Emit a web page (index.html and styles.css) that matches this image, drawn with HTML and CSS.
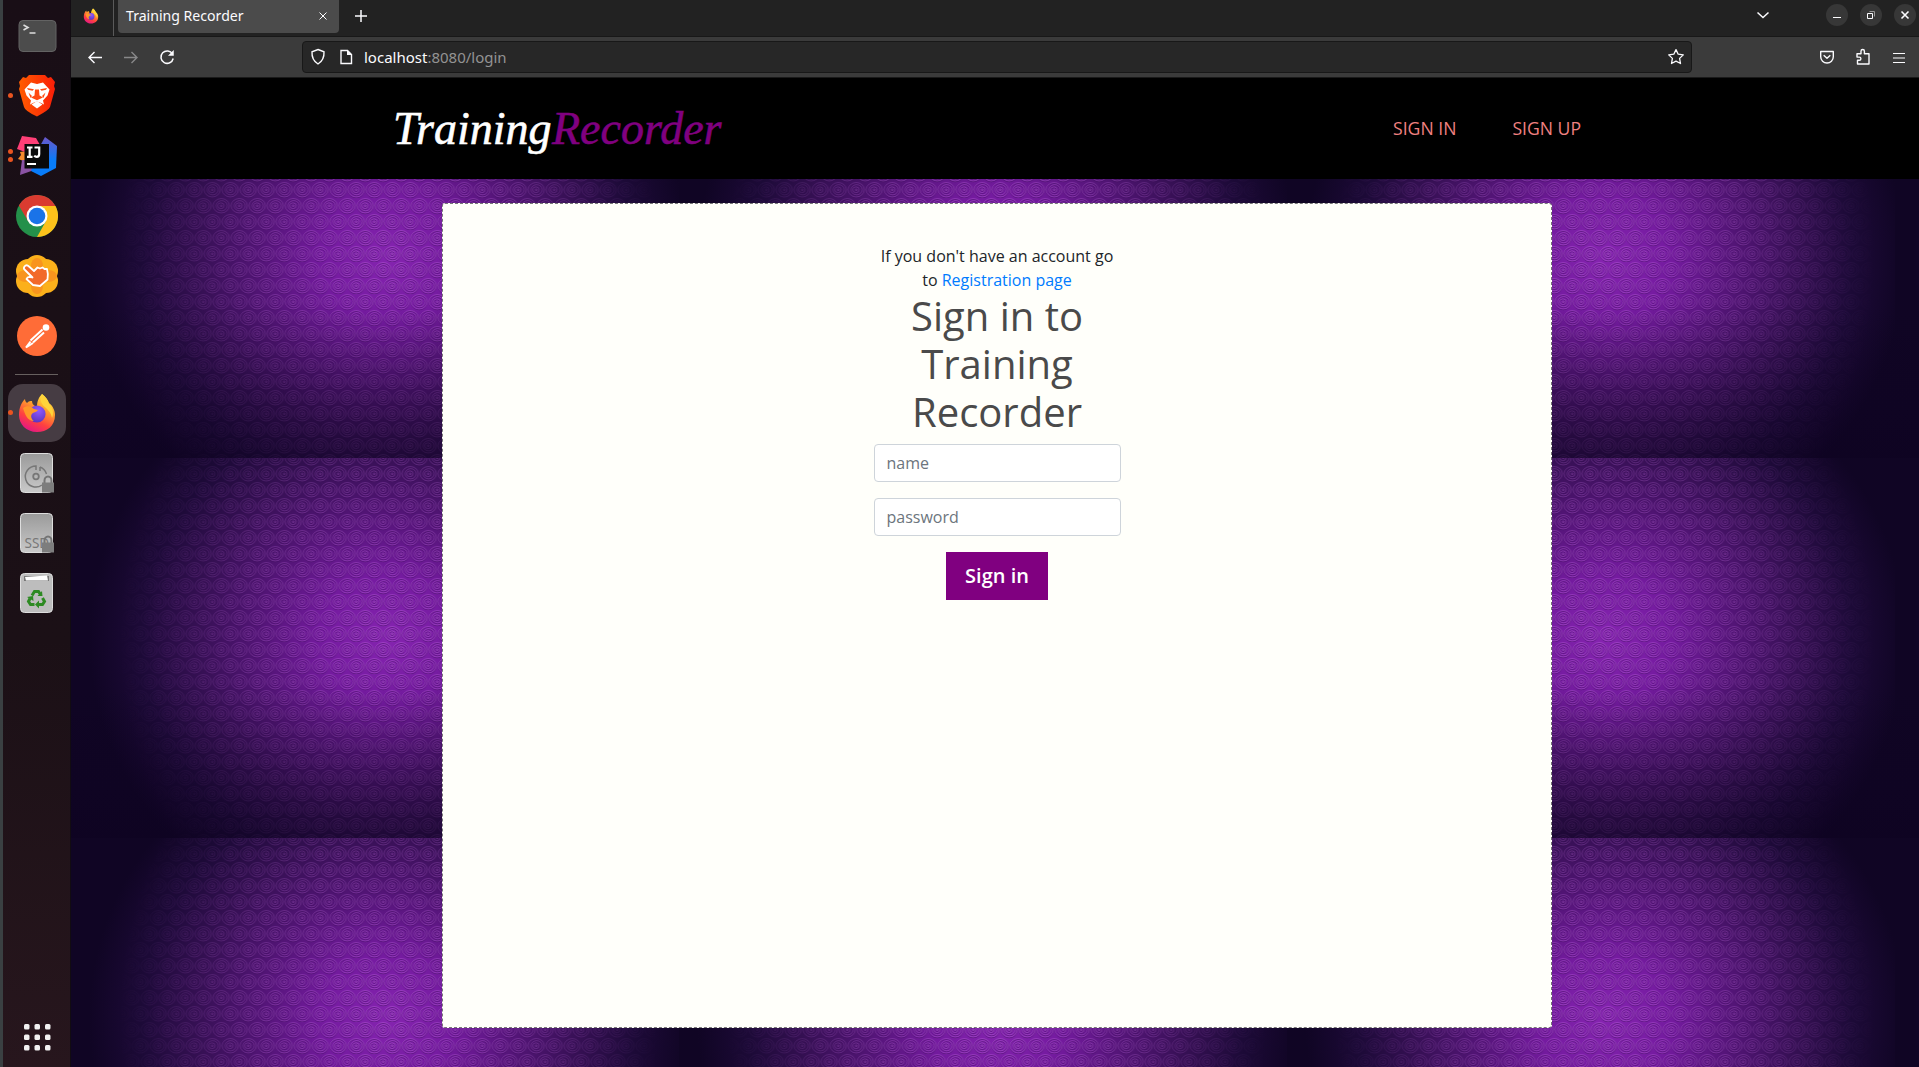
FILE: index.html
```html
<!DOCTYPE html>
<html lang="en">
<head>
<meta charset="utf-8">
<title>Training Recorder</title>
<link rel="stylesheet" href="styles.css">
</head>
<body>
<svg class="defs" width="0" height="0" aria-hidden="true">
  <defs>
    <linearGradient id="flame" x1=".8" y1="0" x2=".3" y2="1"><stop offset="0" stop-color="#fff44f"/><stop offset=".35" stop-color="#ffa42b"/><stop offset=".7" stop-color="#ff4040"/><stop offset="1" stop-color="#e31587"/></linearGradient>
    <radialGradient id="globe" cx=".6" cy=".3" r=".8"><stop offset="0" stop-color="#9059ff"/><stop offset="1" stop-color="#5430b8"/></radialGradient>
    <linearGradient id="brave"><stop offset="0" stop-color="#ff5c00"/><stop offset="1" stop-color="#fa1e08"/></linearGradient>
    <linearGradient id="disk" x2="0" y2="1"><stop offset="0" stop-color="#9a9a9a"/><stop offset="1" stop-color="#c9c9c9"/></linearGradient>
    <linearGradient id="blue" x2="0" y2="1"><stop offset="0" stop-color="#6b57c9"/><stop offset=".6" stop-color="#087cfa"/></linearGradient>
    <symbol id="firefox" viewBox="0 0 38 40">
      <path fill="url(#flame)" d="M24 1C28 4 30 7 31 10C35 13 37 18 37 22C37 33 29 39 19 39C8 39 1 31 1 22C1 15 3 10 7 6C7 8 8 9 9 10C11 8 12 8 14 8C14 10 15 12 17 13L19 14C19 8 21 4 24 1Z"/>
      <circle cx="19" cy="21" r="8.6" fill="url(#globe)"/>
      <path fill="#ff9828" d="M5 15C9 12 13 13 16 16L20 17C19 19 16 19 15 20C12 22 13 26 16 28C9 28 7 21 5 15Z"/>
      <path fill="#ffd43a" d="M24 1C28 4 30 8 31 11C35 15 36 20 34 25C33 20 31 18 28 15C24 12 21 8 24 1Z"/>
    </symbol>
    <symbol id="lock" viewBox="0 0 12 17"><path d="M2.500 8V5a3.500 4 0 0 1 7 0v3" fill="none" stroke="#747474" stroke-width="2"/><path d="M0 7h12v10H0z" fill="#7d7d7d"/></symbol>
  </defs>
</svg>
<div class="desktop">
  <aside class="dock">
    <div class="app"><svg width="39" height="34" viewBox="0 0 38 34"><rect x=".5" y="1.500" width="37" height="31" rx="4" fill="#4c4c4c" stroke="#636363"/><path d="M5 6l4.500 2.500L5 11M11 14h6" fill="none" stroke="#ddd" stroke-width="1.600"/></svg></div>
    <div class="app"><i class="dot"></i><svg width="36" height="42" viewBox="0 0 36 42"><path fill="url(#brave)" d="M10 0h16l3 3 3-1 4 5-1 4 1 3-5 18q-1 3-13 9.500Q6 36 5 32L0 14l1-3-1-4 4-5 3 1z"/><path fill="#fff" d="M12 7.500l6 1.500 6-1.500 6.500 7-2 6-4.500 5 1 4-4-2-3-1-3 1-4 2 1-4-4.500-5-2-6z"/><path fill="#ff4a12" d="M8 13l7 1.200-1.500 1.500L9 14.800zM28 13l-7 1.200 1.500 1.500 4.500-.9zM16 14.500h4l.5 6 3.500 2-6 2.700-6-2.700 3.500-2zM9.500 17.500l3.500 3.500-1.500 2zM26.500 17.500L23 21l1.500 2z"/><path fill="#fff" d="M18 26l5.500 3.500L18 33.500l-5.500-4z"/></svg></div>
    <div class="app"><i class="dot pair"></i><svg width="40" height="40" viewBox="0 0 40 40"><path fill="#f58b2d" d="M3 16l12-2v14L1 23l3-4z"/><path fill="#ff3f77" d="M5 0l14 2 8 14H8L0 13z"/><path fill="#8b53a4" d="M5 24l-2 15 17-6 3-9z"/><path fill="url(#blue)" d="M28 1l12 9-1 22-15 8-10-5 9-25z"/><rect x="7.500" y="8" width="24.500" height="24.500" fill="#090909"/><path fill="none" stroke="#fff" stroke-width="2.200" d="M10 11.500h5.500M12.700 11.500v9M10 20.800h5.500M17.500 11.500h4.700v6.500q0 2.800-2.500 2.800-1.500 0-2.500-1.200M10 28h9"/></svg></div>
    <div class="app"><svg width="42" height="42" viewBox="0 0 42 42"><circle cx="21" cy="21" r="21" fill="#24904a"/><path fill="#fcc21b" d="M21 11h18.500A21 21 0 0 1 21 42l9-16z"/><path fill="#da3b30" d="M2.800 10.500A21 21 0 0 1 39.500 11H21L12 26z"/><circle cx="21" cy="21" r="10.500" fill="#fff"/><circle cx="21" cy="21" r="8.300" fill="#1a73e8"/></svg></div>
    <div class="app"><svg width="42" height="42" viewBox="0 0 42 42"><g fill="#fbb01b"><circle cx="21" cy="12" r="12"/><circle cx="21" cy="30" r="12"/><circle cx="12" cy="16" r="12"/><circle cx="30" cy="16" r="12"/><circle cx="12" cy="26" r="12"/><circle cx="30" cy="26" r="12"/></g><g fill="#f78b1f" opacity=".75"><ellipse cx="21" cy="11" rx="6" ry="8"/><ellipse cx="21" cy="31" rx="6" ry="8"/><ellipse cx="10" cy="21" rx="9" ry="6"/><ellipse cx="32" cy="21" rx="9" ry="6"/><circle cx="21" cy="21" r="11"/></g><path fill="#f2692a" stroke="#fff" stroke-width="1.800" stroke-linejoin="round" d="M8.500 11.500q2-2.500 4.500 0l5 4.500 3.500-3.500 2.500 1 2.500-1 2 1.500 2.500 0q1.500 5 .5 10.500L24 31l-7-1-6.500-6q1-3 6-1.500L9 15q-2-1.500-.5-3.500z"/></svg></div>
    <div class="app"><svg width="40" height="40" viewBox="0 0 40 40"><circle cx="20" cy="20" r="20" fill="#ff6c37"/><circle cx="29" cy="11.500" r="3.300" fill="#fff"/><path d="M25.500 13.500L13.500 24.500M27 16.500L16 26.500M13.500 25.500l-4.500 6 7-4.500" fill="none" stroke="#fff" stroke-width="2"/></svg></div>
    <div class="rule"></div>
    <div class="app"><div class="active"><svg width="38" height="40"><use href="#firefox"/></svg></div><i class="dot"></i></div>
    <div class="app"><svg width="34" height="40" viewBox="0 0 34 40"><rect x=".5" y=".5" width="32" height="39" rx="4" fill="url(#disk)" stroke="#ddd"/><path d="M16 17v-4A10.500 10.500 0 1 0 22 32M20 14l0 4M20 14q5 2 6.500 7" fill="none" stroke="#777" stroke-width="1.500"/><circle cx="16" cy="23.500" r="2.800" fill="none" stroke="#777" stroke-width="1.800"/><use href="#lock" x="22" y="22" width="12" height="18"/></svg></div>
    <div class="app"><svg width="34" height="40" viewBox="0 0 34 40"><rect x=".5" y=".5" width="32" height="39" rx="4" fill="url(#disk)" stroke="#ddd"/><text class="ssd" x="4.500" y="35">SSD</text><use href="#lock" x="22" y="22" width="12" height="18"/></svg></div>
    <div class="app"><svg width="34" height="40" viewBox="0 0 34 40"><rect x=".5" y=".5" width="32" height="39" rx="4" fill="#bdbdbd" stroke="#ddd"/><path d="M4 3h25v5H4z" fill="#777"/><path d="M5 4l22-1.500 1 5H6z" fill="#fff"/><g fill="none" stroke="#2d8a22" stroke-width="3"><path d="M12 22.500l2.500-4h4l2 3M22.500 25l2 3.500-2 3H18M14.500 31.500h-4l-2-3 1.500-3"/></g><path fill="#2d8a22" d="M17.500 23l5 0-.5-5zM19 27.500v8l-4-4zM7 24l6-1 .5 5z"/></svg></div>
    <div class="app launcher"><svg width="28" height="28" viewBox="0 0 28 28" fill="#f2f2f2"><g id="dots"><rect x="1" y="1" width="5.500" height="5.500" rx="1.500"/><rect x="11.500" y="1" width="5.500" height="5.500" rx="1.500"/><rect x="22" y="1" width="5.500" height="5.500" rx="1.500"/></g><use href="#dots" y="10.500"/><use href="#dots" y="21"/></svg></div>
  </aside>

  <div class="browser">
    <div class="tabbar">
      <div class="pinned"><svg width="16" height="16"><use href="#firefox"/></svg></div>
      <div class="tab"><span class="tab-title">Training Recorder</span><svg width="10" height="10" viewBox="0 0 10 10"><path d="M1.500 1.500l7 7M8.500 1.500l-7 7"/></svg></div>
      <svg class="new" width="14" height="14" viewBox="0 0 14 14"><path d="M7 1v12M1 7h12" stroke-width="1.500"/></svg>
      <svg class="list" width="14" height="8" viewBox="0 0 14 8"><path d="M1.500 1.500L7 6.500l5.500-5" stroke-width="1.500"/></svg>
      <div class="win"><svg width="10" height="10" viewBox="0 0 10 10"><path d="M1 7.500h8"/></svg></div>
      <div class="win"><svg width="10" height="10" viewBox="0 0 10 10"><path d="M1.500 3.500h5v5h-5z"/><path d="M3.500 1.500h5v5" stroke="#999"/></svg></div>
      <div class="win"><svg width="10" height="10" viewBox="0 0 10 10"><path d="M1.500 1.500l7 7M8.500 1.500l-7 7" stroke-width="1.600"/></svg></div>
    </div>
    <div class="toolbar">
      <div class="tool"><svg width="16" height="16" viewBox="0 0 16 16"><path d="M15 8.500H2M7.500 3L2 8.500 7.500 14" stroke-width="1.400"/></svg></div>
      <div class="tool off"><svg width="16" height="16" viewBox="0 0 16 16"><path d="M1 8.500h13M8.500 3L14 8.500 8.500 14" stroke-width="1.400"/></svg></div>
      <div class="tool"><svg width="16" height="16" viewBox="0 0 16 16"><path d="M13.500 5A6.200 6.200 0 1 0 14.200 9.500" stroke-width="1.500"/><path d="M14.500 1.500v5h-5z" fill="#fbfbfe" stroke-width=".5"/></svg></div>
      <div class="urlbar">
        <svg width="16" height="18" viewBox="0 0 16 18"><path d="M8 1.500l6 2.300q.5 8.200-6 12.200Q1.500 12 2 3.800z" stroke-width="1.400"/></svg>
        <svg width="14" height="16" viewBox="0 0 14 16"><path d="M2 1.500h6.500L12.500 5.500v9H2z" stroke-width="1.400"/><path d="M8 1v5h5z" fill="#fbfbfe" stroke="none"/></svg>
        <span class="url"><b>localhost</b>:8080/login</span>
        <svg class="star" width="18" height="18" viewBox="0 0 18 18"><path d="M9 1.600l2.200 4.600 5.100.700-3.700 3.500.9 5.100L9 13.100l-4.500 2.400.9-5.100L1.700 6.900l5.100-.7z" stroke-width="1.300" stroke-linejoin="round"/></svg>
      </div>
      <div class="right">
        <div class="tool"><svg width="16" height="16" viewBox="0 0 16 16"><path d="M1.700 2.500h12.600v5.200a6.300 6.300 0 0 1-12.600 0zM4.700 6.200L8 9.300l3.300-3.100" stroke-width="1.400" stroke-linejoin="round"/></svg></div>
        <div class="tool"><svg width="16" height="18" viewBox="0 0 16 18"><path d="M2.500 16v-3.700h1.800a1.600 1.600 0 0 0 0-3.200H2V5.700h4V3.200a1.700 1.700 0 0 1 3.400 0v2.500H14V16z" stroke-width="1.400" stroke-linejoin="round"/></svg></div>
        <div class="tool"><svg width="14" height="14" viewBox="0 0 14 14"><path d="M1 3.500h12M1 8h12M1 12.500h12" stroke-width="1.200"/></svg></div>
      </div>
    </div>

    <div class="page">
      <header class="site-header">
        <div class="logo"><span class="logo-a">Training</span><span class="logo-b">Recorder</span></div>
        <nav class="nav"><a>SIGN IN</a><a>SIGN UP</a></nav>
      </header>
      <main class="card">
        <form class="signin">
          <p>If you don't have an account go to <a>Registration page</a></p>
          <h1>Sign in to Training Recorder</h1>
          <input type="text" placeholder="name">
          <input type="password" placeholder="password">
          <button type="button">Sign in</button>
        </form>
      </main>
    </div>
  </div>
</div>
</body>
</html>
```
FILE: styles.css
```css
* { box-sizing: border-box; }
body { margin: 0; overflow: hidden; font-family: "Open Sans", "Noto Sans", sans-serif; }
.defs { position: absolute; }
.desktop { display: flex; height: 1067px; }

.dock {
  width: 71px; flex: none; display: flex; flex-direction: column; align-items: stretch;
  padding-top: 6px; border-left: 3px solid #3a4042; border-right: 1px solid #120c12;
  background: linear-gradient(#190e16, #1b1016 60%, #27161d);
}
.app { position: relative; height: 60px; flex: none; display: flex; align-items: center; justify-content: center; padding-left: 1px; }
.app svg { display: block; }
.dot { position: absolute; left: 5px; top: 27px; width: 5px; height: 5px; border-radius: 50%; background: #e95420; }
.dot.pair { top: 23px; box-shadow: 0 8px #e95420; }
.active { width: 58px; height: 58px; flex: none; border-radius: 15px; background: #463c43; display: flex; align-items: center; justify-content: center; }
.rule { height: 1px; margin: 8px 12px; background: #67605f; flex: none; }
.launcher { margin-top: auto; }
.ssd { font: 13.5px "Noto Sans", sans-serif; fill: #777; }

.browser { flex: 1; display: flex; flex-direction: column; min-width: 0; }
.browser svg { fill: none; stroke: #fbfbfe; flex: none; }
.browser .pinned svg { stroke: none; }
.tabbar { height: 37px; background: #222; border-bottom: 1px solid #181818; display: flex; align-items: flex-start; flex: none; }
.pinned { width: 43px; height: 36px; border-right: 1px solid #5a5a5a; padding: 7px 0 0 12px; }
.tab {
  width: 221px; height: 33px; margin-left: 4px; padding: 0 11px 2px 8px; border-radius: 0 0 4px 4px;
  background: #4b4b4b; display: flex; align-items: center; justify-content: space-between;
}
.tab-title { color: #fbfbfe; font-family: "Noto Sans", sans-serif; font-size: 14.1px; white-space: nowrap; }
.new { margin: 9px 0 0 15px; }
.list { margin: 11px 56px 0 auto; }
.win { width: 22px; height: 22px; margin: 4px 12px 0 0; border-radius: 50%; background: #373737; display: flex; align-items: center; justify-content: center; }
.win:last-child { margin-right: 3px; }

.toolbar { height: 41px; padding-left: 6px; background: #3b3b3b; border-bottom: 1px solid #1a1a1a; display: flex; align-items: center; flex: none; }
.tool { width: 36px; display: flex; justify-content: center; align-items: center; }
.off { opacity: .4; }
.urlbar {
  width: 1390px; height: 32px; margin-left: 117px; padding: 0 6px 0 7px; background: #272727;
  border: 1px solid #181818; border-radius: 4px; display: flex; align-items: center; gap: 13px;
}
.url { color: #939393; font-family: "Noto Sans", sans-serif; font-size: 15px; margin-left: -2px; }
.url b { color: #fbfbfe; font-weight: 400; }
.star { margin-left: auto; }
.right { margin-left: auto; display: flex; padding-right: 2px; }

.page {
  flex: 1; padding-bottom: 39px; display: flex; flex-direction: column; background-color: #0f0625;
  background-size: 608px 380px;
  background-image: url("data:image/svg+xml,%3Csvg xmlns='http://www.w3.org/2000/svg' width='608' height='380'%3E%3Cdefs%3E%3CradialGradient id='g' gradientUnits='userSpaceOnUse' cx='0' cy='0' r='1' gradientTransform='translate(318 180) scale(300 290)'%3E%3Cstop offset='0' stop-color='%238524b0'/%3E%3Cstop offset='.22' stop-color='%23741b9f'/%3E%3Cstop offset='.42' stop-color='%23551579'/%3E%3Cstop offset='.64' stop-color='%23361054'/%3E%3Cstop offset='.82' stop-color='%231d0a38'/%3E%3Cstop offset='1' stop-color='%23100524'/%3E%3C/radialGradient%3E%3CradialGradient id='f' gradientUnits='userSpaceOnUse' cx='0' cy='0' r='1' gradientTransform='translate(318 178) scale(270 330)'%3E%3Cstop offset='0' stop-color='%23fff'/%3E%3Cstop offset='.5' stop-color='%23aaa'/%3E%3Cstop offset='1' stop-color='%23000'/%3E%3C/radialGradient%3E%3ClinearGradient id='d' x2='0' y2='1'%3E%3Cstop offset='.6' stop-color='%230d0220' stop-opacity='0'/%3E%3Cstop offset='1' stop-color='%230d0220' stop-opacity='.5'/%3E%3C/linearGradient%3E%3Cmask id='m'%3E%3Crect width='608' height='380' fill='url(%23f)'/%3E%3C/mask%3E%3Cg id='s' fill='none'%3E%3Cellipse rx='8.100' ry='7.200'/%3E%3Cellipse cx='.4' rx='5.600' ry='5.100'/%3E%3Cellipse cx='-.3' rx='3.200' ry='2.900'/%3E%3Cellipse rx='1' ry='.9'/%3E%3C/g%3E%3Cpattern id='p' x='-2.700' y='24' width='18' height='32' patternUnits='userSpaceOnUse'%3E%3Cg stroke='%23290047' stroke-opacity='.4' stroke-width='1'%3E%3Cuse href='%23s' x='9' y='8.600'/%3E%3Cuse href='%23s' x='0' y='24.600'/%3E%3Cuse href='%23s' x='18' y='24.600'/%3E%3C/g%3E%3Cg stroke='%23d27af0' stroke-opacity='.48' stroke-width='.8'%3E%3Cuse href='%23s' x='9' y='7.800'/%3E%3Cuse href='%23s' x='0' y='23.800'/%3E%3Cuse href='%23s' x='18' y='23.800'/%3E%3C/g%3E%3C/pattern%3E%3C/defs%3E%3Crect width='608' height='380' fill='url(%23g)'/%3E%3Crect width='608' height='380' fill='url(%23p)' mask='url(%23m)'/%3E%3Crect width='608' height='380' fill='url(%23d)'/%3E%3C/svg%3E");
}
.site-header { height: 101px; flex: none; background: #000; display: flex; justify-content: space-between; align-items: center; padding: 0 338px 0 322px; }
.logo { font: italic 46px/60px "Liberation Serif", cursive; display: flex; -webkit-text-stroke: .6px currentColor; }
.logo-a { color: #fff; width: 159px; }
.logo-b { color: #800080; }
.nav { display: flex; gap: 56px; font-size: 17.6px; line-height: 24px; padding-bottom: 1px; }
.nav a { color: #f08080; }
.card {
  width: 1110px; flex: 1; margin: 24px 0 0 371px; padding-top: 40px; border: 1px dashed #777;
  border-radius: 3px; background: #fffffa;
}
.signin { width: 247px; margin: 0 auto; text-align: center; color: #212529; font-size: 16px; line-height: 24px; display: flex; flex-direction: column; align-items: center; }
.signin p { margin: 0; }
.signin p a { color: #007bff; }
.signin h1 { margin: 0 20px 8px; font-size: 40px; line-height: 48px; font-weight: 400; color: #4a4a4a; }
.signin input { width: 100%; height: 38px; margin: 0 0 16px; padding: 6px 12px; border: 1px solid #ced4da; border-radius: 4px; background: #fff; font: inherit; }
.signin input::placeholder { color: #6c757d; opacity: 1; }
.signin button { width: 102px; height: 48px; padding: 0; border: 0; background: #800080; color: #fff; font: 600 20px/30px "Open Sans", "Noto Sans", sans-serif; }
```
